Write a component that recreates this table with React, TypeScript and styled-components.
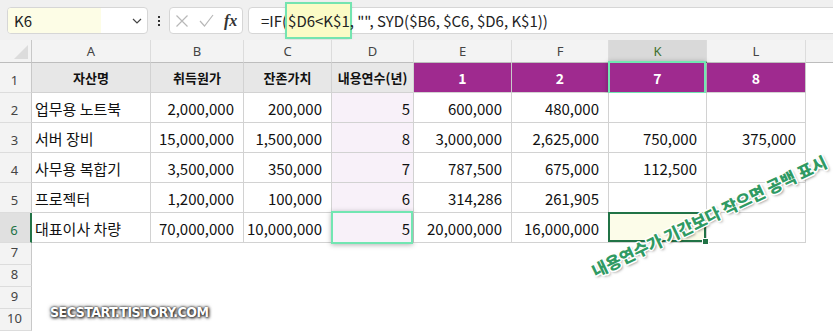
import styled, { createGlobalStyle, css } from "styled-components";

const GlobalStyle = createGlobalStyle`
  html, body { margin: 0; padding: 0; background: #fff; }
  body { font-family: "Noto Sans CJK KR", "Noto Sans", sans-serif; }
`;

const LETTERS = ["A", "B", "C", "D", "E", "F", "K", "L"];
const YEARS = ["1", "2", "7", "8"];
const HEADS = ["자산명", "취득원가", "잔존가치", "내용연수(년)"];

const ROWS = [
  ["업무용 노트북", "2,000,000", "200,000", "5", "600,000", "480,000", "", ""],
  ["서버 장비", "15,000,000", "1,500,000", "8", "3,000,000", "2,625,000", "750,000", "375,000"],
  ["사무용 복합기", "3,500,000", "350,000", "7", "787,500", "675,000", "112,500", ""],
  ["프로젝터", "1,200,000", "100,000", "6", "314,286", "261,905", "", ""],
  ["대표이사 차량", "70,000,000", "10,000,000", "5", "20,000,000", "16,000,000", "", ""],
];

const Screen = styled.div`
  position: relative;
  width: 833px;
  height: 333px;
  overflow: hidden;
  background: #fff;
`;

/* ---------- formula bar ---------- */
const Bar = styled.div`
  height: 40px;
  box-sizing: border-box;
  background: #f0f0f0;
  display: flex;
  align-items: flex-start;
  padding: 7px 0 0 7px;
`;

const NameBox = styled.div`
  width: 141px;
  height: 27px;
  box-sizing: border-box;
  background: #fff;
  border: 1px solid #d6d6d6;
  border-radius: 4px;
  display: flex;
  align-items: center;
  overflow: hidden;
`;

const NameField = styled.div`
  width: 93px;
  height: 100%;
  background: #fdfde6;
  display: flex;
  align-items: center;
  padding-left: 6px;
  box-sizing: border-box;
  font-size: 15px;
  color: #222;
`;

const Chevron = styled.svg`
  margin-left: 31px;
`;

const Dots = styled.div`
  width: 21px;
  height: 27px;
  display: flex;
  flex-direction: column;
  align-items: center;
  justify-content: center;
  gap: 2px;
  span {
    width: 2px;
    height: 2px;
    background: #333;
  }
`;

const FxBox = styled.div`
  width: 74px;
  height: 27px;
  box-sizing: border-box;
  background: #fff;
  border: 1px solid #d6d6d6;
  border-radius: 4px;
  display: flex;
  align-items: center;
  padding-left: 5px;
  gap: 10px;
`;

const Fx = styled.span`
  font-family: "Liberation Serif", serif;
  font-style: italic;
  font-weight: bold;
  font-size: 16px;
  color: #333;
`;

const FormulaBox = styled.div`
  flex: 1;
  margin-left: 5px;
  margin-right: -10px;
  height: 27px;
  box-sizing: border-box;
  background: #fff;
  border: 1px solid #d6d6d6;
  border-radius: 4px;
  display: flex;
  align-items: center;
  padding-left: 12px;
  font-size: 15px;
  color: #222;
  white-space: pre;
`;

const Ref = styled.span`
  background: #fbfbc6;
  outline: 2px solid #74e4b0;
  box-shadow: 0 1px 4px rgba(0, 0, 0, 0.25);
  padding: 6px 0 6px 1px;
`;

/* ---------- sheet grid ---------- */
const Sheet = styled.div`
  display: grid;
  grid-template-columns: 32px 119px 93px 88px 82px 98px 97px 98px 99px 1fr;
  grid-template-rows: 23px repeat(6, 30px) repeat(4, 22px);
`;

const Corner = styled.div`
  position: relative;
  background: #f3f3f3;
  border-right: 1px solid #c8c8c8;
  border-bottom: 1px solid #bdbdbd;
  &::after {
    content: "";
    position: absolute;
    right: 3px;
    bottom: 3px;
    border-style: solid;
    border-width: 0 0 14px 14px;
    border-color: transparent transparent #dcdcdc transparent;
  }
`;

const ColHead = styled.div<{ $active?: boolean; $blank?: boolean }>`
  background: ${(p) => (p.$active ? "#d9d9d9" : "#f3f3f3")};
  border-right: ${(p) => (p.$blank ? "none" : "1px solid #dcdcdc")};
  border-bottom: ${(p) => (p.$active ? "2px solid #1f5e3c" : "1px solid #bdbdbd")};
  display: flex;
  align-items: center;
  justify-content: center;
  font-family: "Noto Sans", sans-serif;
  font-size: 13px;
  color: ${(p) => (p.$active ? "#3f6f2e" : "#444")};
`;

const RowHead = styled.div<{ $active?: boolean }>`
  background: ${(p) => (p.$active ? "#e0e0e0" : "#f3f3f3")};
  border-right: ${(p) => (p.$active ? "2px solid #217346" : "1px solid #c8c8c8")};
  border-bottom: 1px solid #dcdcdc;
  display: flex;
  align-items: flex-end;
  justify-content: center;
  padding-bottom: 3px;
  padding-right: 2px;
  box-sizing: border-box;
  font-family: "Noto Sans", sans-serif;
  font-size: 13px;
  color: ${(p) => (p.$active ? "#217346" : "#444")};
`;

type Kind = "label" | "num" | "count" | "head" | "year";

const Cell = styled.div<{ $kind: Kind; $tint?: boolean; $mark?: "glow" | "select" }>`
  position: relative;
  box-sizing: border-box;
  border-right: 1px solid #d2d2d2;
  border-bottom: 1px solid #d2d2d2;
  display: flex;
  align-items: center;
  padding-top: 2px;
  font-size: 15px;
  color: #111;
  white-space: nowrap;
  background: ${(p) => (p.$tint ? "#f8f1f9" : "#fff")};
  ${(p) =>
    p.$kind === "label" &&
    css`
      padding-left: 3px;
    `}
  ${(p) =>
    p.$kind === "num" &&
    css`
      justify-content: flex-end;
      padding-right: 9px;
    `}
  ${(p) =>
    p.$kind === "count" &&
    css`
      justify-content: flex-end;
      padding-right: 3px;
    `}
  ${(p) =>
    p.$kind === "head" &&
    css`
      justify-content: center;
      padding-top: 0;
      background: #e7e7e7;
      font-size: 13px;
      font-weight: bold;
      color: #111;
    `}
  ${(p) =>
    p.$kind === "year" &&
    css`
      justify-content: center;
      padding-top: 0;
      background: #9f2a8f;
      border-right-color: #c9c9c9;
      font-size: 14px;
      font-weight: bold;
      color: #fff;
    `}
  ${(p) =>
    p.$mark === "glow" &&
    css`
      &::after {
        content: "";
        position: absolute;
        inset: -2px 0 -2px -1px;
        border: 2px solid #72e6b2;
        box-shadow: 0 1px 5px rgba(0, 0, 0, 0.3);
        pointer-events: none;
      }
    `}
  ${(p) =>
    p.$mark === "select" &&
    css`
      background: #fcfce9;
      &::after {
        content: "";
        position: absolute;
        inset: -1px 0 0 -1px;
        border: 2px solid #217346;
      }
      &::before {
        content: "";
        position: absolute;
        right: -3px;
        bottom: -3px;
        width: 5px;
        height: 5px;
        background: #217346;
        border: 1px solid #fff;
        z-index: 2;
      }
    `}
`;

const Blank = styled.div<{ $span?: boolean }>`
  background: #fff;
  ${(p) =>
    p.$span &&
    css`
      grid-column: 2 / -1;
    `}
`;

/* ---------- overlays ---------- */
const Note = styled.div`
  position: absolute;
  left: 709px;
  top: 216px;
  transform: translate(-50%, -50%) rotate(-25.5deg);
  white-space: nowrap;
  font-size: 16.5px;
  font-weight: 900;
  color: #2f9a63;
  text-shadow: -1px -1px 0 #fff, 1px -1px 0 #fff, -1px 1px 0 #fff, 1px 1px 0 #fff,
    0 -1.5px 0 #fff, 0 1.5px 0 #fff, -1.5px 0 0 #fff, 1.5px 0 0 #fff,
    1px 2px 3px rgba(0, 0, 0, 0.55);
`;

const Watermark = styled.div`
  position: absolute;
  left: 50px;
  top: 304px;
  font-family: "Liberation Sans Narrow", "DejaVu Sans Condensed", sans-serif;
  font-weight: bold;
  font-size: 14px;
  color: #fff;
  letter-spacing: -0.5px;
  text-shadow: 0 0 2px #222, 1px 1px 3px #222, 0 0 4px rgba(0, 0, 0, 0.6);
`;

export default function App() {
  return (
    <Screen>
      <GlobalStyle />
      <Bar>
        <NameBox>
          <NameField>K6</NameField>
          <Chevron width="10" height="6" viewBox="0 0 10 6">
            <path d="M1 1l4 4 4-4" fill="none" stroke="#444" strokeWidth="1.2" />
          </Chevron>
        </NameBox>
        <Dots>
          <span />
          <span />
          <span />
        </Dots>
        <FxBox>
          <svg width="14" height="14" viewBox="0 0 14 14">
            <path d="M1.5 1.5l11 11M12.5 1.5l-11 11" stroke="#b8b8b8" strokeWidth="1.2" />
          </svg>
          <svg width="15" height="13" viewBox="0 0 15 13">
            <path d="M1 7l4.5 5L14 1" fill="none" stroke="#b8b8b8" strokeWidth="1.2" />
          </svg>
          <Fx>fx</Fx>
        </FxBox>
        <FormulaBox>
          =IF(<Ref>$D6&lt;K$1</Ref>, "", SYD($B6, $C6, $D6, K$1))
        </FormulaBox>
      </Bar>

      <Sheet>
        <Corner />
        {LETTERS.map((l) => (
          <ColHead key={l} $active={l === "K"}>
            {l}
          </ColHead>
        ))}
        <ColHead $blank />

        <RowHead>1</RowHead>
        {HEADS.map((h) => (
          <Cell key={h} $kind="head">
            {h}
          </Cell>
        ))}
        {YEARS.map((y) => (
          <Cell key={y} $kind="year" $mark={y === "7" ? "glow" : undefined}>
            {y}
          </Cell>
        ))}
        <Blank />

        {ROWS.map((row, r) => (
          <>
            <RowHead key={`h${r}`} $active={r === 4}>
              {r + 2}
            </RowHead>
            {row.map((v, c) => (
              <Cell
                key={`${r}-${c}`}
                $kind={c === 0 ? "label" : c === 3 ? "count" : "num"}
                $tint={c === 3}
                $mark={r === 4 && c === 3 ? "glow" : r === 4 && c === 6 ? "select" : undefined}
              >
                {v}
              </Cell>
            ))}
            <Blank key={`b${r}`} />
          </>
        ))}

        {[7, 8, 9, 10].map((n) => (
          <>
            <RowHead key={`h${n}`}>{n}</RowHead>
            <Blank key={`b${n}`} $span />
          </>
        ))}
      </Sheet>

      <Note>내용연수가 기간보다 작으면 공백 표시</Note>
      <Watermark>SECSTART.TISTORY.COM</Watermark>
    </Screen>
  );
}
